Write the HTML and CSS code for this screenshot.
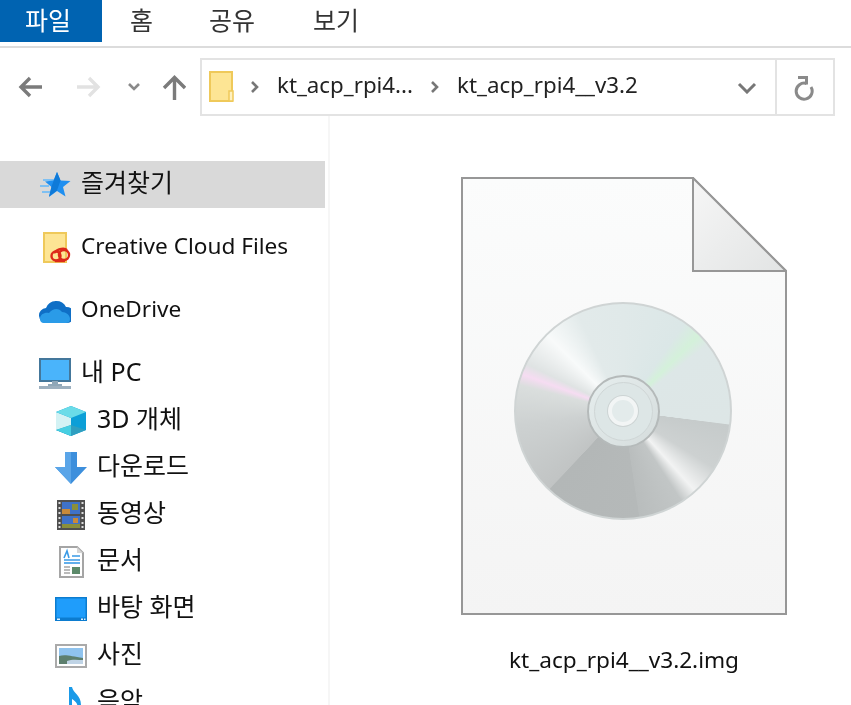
FILE: index.html
```html
<!DOCTYPE html>
<html lang="ko">
<head>
<meta charset="utf-8">
<title>kt_acp_rpi4__v3.2</title>
<link rel="stylesheet" href="styles.css">
</head>
<body>
<header class="ribbon">
  <div class="tab tab-file">파일</div>
  <div class="tab">홈</div>
  <div class="tab">공유</div>
  <div class="tab tab-last">보기</div>
</header>
<nav class="navbar">
  <div class="nav-buttons">
    <svg class="nav-svg" width="186" height="32" viewBox="0 0 186 32" fill="none" stroke-width="3.400">
      <path d="M42 16H21M30 7l-9 9 9 9" stroke="#7b7b7b"/>
      <path d="M77 16h21M89 7l9 9-9 9" stroke="#e2e2e2"/>
      <path d="M129 13l5 5 5-5" stroke="#8a8a8a" stroke-width="2.600"/>
      <path d="M174.500 29V7M164 17l10.500-10.500L185 17" stroke="#7b7b7b"/>
    </svg>
  </div>
  <div class="address">
    <div class="crumbs">
      <svg class="folder" width="26" height="32" viewBox="0 0 26 32">
        <rect x="1" y="1" width="22" height="29" fill="#fde594" stroke="#efc95a" stroke-width="2"/>
        <rect x="20" y="20" width="4" height="10" fill="#fff1c0" stroke="#efc95a" stroke-width="1.500"/>
      </svg>
      <svg class="chev" width="10" height="14" viewBox="0 0 10 14" fill="none"><path d="M2 2l5 5-5 5" stroke="#777" stroke-width="2.600"/></svg>
      <span class="crumb crumb-a">kt_acp_rpi4...</span>
      <svg class="chev" width="10" height="14" viewBox="0 0 10 14" fill="none"><path d="M2 2l5 5-5 5" stroke="#777" stroke-width="2.600"/></svg>
      <span class="crumb">kt_acp_rpi4__v3.2</span>
    </div>
    <div class="addr-drop">
      <svg width="20" height="12" viewBox="0 0 20 12" fill="none"><path d="M2 2l8 8 8-8" stroke="#777" stroke-width="3"/></svg>
    </div>
    <div class="addr-refresh">
      <svg width="22" height="28" viewBox="0 0 22 28" fill="none" stroke="#8a8a8a" stroke-width="3">
        <path d="M12.500 10.500A8 8 0 1 0 17 14"/>
        <path d="M4 4.500h8.500v7"/>
      </svg>
    </div>
  </div>
</nav>
<main class="main">
  <aside class="sidebar">
    <div class="row selected">
      <svg class="ico" viewBox="0 0 32 32">
        <path d="M4 11h11M1 17h9M3 23h8" stroke="#7fc0f2" stroke-width="2"/>
        <path d="M18 3l3.500 8.500 10 .5-7.500 6 2.500 9.500-8.500-5.500-8 6 2.500-10-6.500-5.500 8.500-1z" fill="#1f8ff0"/>
        <path d="M18 3l3.500 8.500-3.500 10-8 6 2.500-10z" fill="#0f7ad8"/>
      </svg>
      <span>즐겨찾기</span>
    </div>
    <div class="row gap">
      <svg class="ico" viewBox="0 0 32 32">
        <rect x="5" y="1" width="22" height="29" fill="#fde594" stroke="#efc95a" stroke-width="2"/>
        <g fill="none" stroke="#dd2a1a" stroke-width="2.400">
          <circle cx="17" cy="24" r="4.500"/><circle cx="25" cy="23" r="5"/><path d="M16 29h10"/><path d="M15 21c4-5 11-5 13-3"/>
        </g>
      </svg>
      <span>Creative Cloud Files</span>
    </div>
    <div class="row gap">
      <svg class="ico" viewBox="0 0 32 32">
        <path d="M8 28a7.500 7.500 0 0 1-1-15 11 11 0 0 1 20-1 8 8 0 0 1 1 16z" fill="#0f6fc6"/>
        <path d="M1 24c0-5 5-7 9-6 4-5 10-5 13-1 4 0 8 3 8 7 0 3-2 4-4 4H5c-3 0-4-2-4-4z" fill="#2a9be8"/>
      </svg>
      <span>OneDrive</span>
    </div>
    <div class="row gap">
      <svg class="ico" viewBox="0 0 32 32">
        <rect x="1" y="1" width="30" height="22" fill="#4ab4fb" stroke="#44779b" stroke-width="2"/>
        <path d="M13 23h6v3h4v2H9v-2h4z" fill="#8fa7b8"/>
        <rect x="0" y="28" width="32" height="3" fill="#9db0bf"/>
      </svg>
      <span>내 PC</span>
    </div>
    <div class="row child">
      <svg class="ico" viewBox="0 0 32 32">
        <path d="M16 1l15 6v18l-15 6L1 25V7z" fill="#0c9fd7"/>
        <path d="M1 7l15 6v12l-15 0z" fill="#d3f2f4"/>
        <path d="M1 7l15-6 15 6-15 6z" fill="#6adce8"/>
        <path d="M1 25l15-5 15 5-15 6z" fill="#2f9fc0"/>
        <path d="M1 25l15-5v11z" fill="#47cfe2"/>
      </svg>
      <span>3D 개체</span>
    </div>
    <div class="row child">
      <svg class="ico" viewBox="0 0 32 32">
        <path d="M10 0h12v15h10L16 32 0 15h10z" fill="#3d8fdc"/>
        <path d="M10 0h6v32L0 15h10z" fill="#5aa5e8"/>
      </svg>
      <span>다운로드</span>
    </div>
    <div class="row child">
      <svg class="ico" viewBox="0 0 32 32">
        <rect x="2" y="1" width="28" height="30" fill="#4f4f4f"/>
        <rect x="7" y="3" width="18" height="12" fill="#3f72c8"/>
        <rect x="7" y="17" width="18" height="12" fill="#3f72c8"/>
        <path d="M7 10h8v5H7zM18 19h5v5h-5z" fill="#c98a3a"/>
        <path d="M17 5h6v6h-6zM7 25h18v4H7z" fill="#8a8f3c"/>
        <path d="M3.500 3h2v2h-2zM3.500 8h2v2h-2zM3.500 13h2v2h-2zM3.500 18h2v2h-2zM3.500 23h2v2h-2zM3.500 27h2v2h-2zM26.500 3h2v2h-2zM26.500 8h2v2h-2zM26.500 13h2v2h-2zM26.500 18h2v2h-2zM26.500 23h2v2h-2zM26.500 27h2v2h-2z" fill="#ddd"/>
      </svg>
      <span>동영상</span>
    </div>
    <div class="row child">
      <svg class="ico" viewBox="0 0 32 32">
        <path d="M5 1h17l6 6v24H5z" fill="#fff" stroke="#a5a5a5" stroke-width="2"/>
        <path d="M22 1v6h6z" fill="#d5d5d5"/>
        <path d="M9 12l3-7 2 7M17 10h8M9 14h16" stroke="#3a9be6" stroke-width="1.600" fill="none"/>
        <path d="M9 17h16" stroke="#3a9be6" stroke-width="1.600"/>
        <path d="M9 21h6M9 24h6M9 27h6" stroke="#a5a5a5" stroke-width="1.600"/>
        <rect x="17" y="21" width="8" height="7" fill="#5c8a6a"/>
      </svg>
      <span>문서</span>
    </div>
    <div class="row child">
      <svg class="ico" viewBox="0 0 32 32">
        <rect x="0" y="4" width="32" height="24" fill="#0c7ccf"/>
        <rect x="1.500" y="5.500" width="29" height="19" fill="#1f9dfb"/>
        <path d="M2 25.500h3v1.500H2zM26 25.500h2v1.500h-2zM29 25.500h1.500v1.500H29z" fill="#dff1ff"/>
      </svg>
      <span>바탕 화면</span>
    </div>
    <div class="row child">
      <svg class="ico" viewBox="0 0 32 32">
        <rect x="1" y="5" width="30" height="22" fill="#fff" stroke="#aaa" stroke-width="2"/>
        <rect x="4" y="8" width="24" height="16" fill="#8fc3ee"/>
        <path d="M4 16c6-2 12 0 24 2v6H4z" fill="#5d7f6e"/>
        <path d="M12 21c5-2 11-1 16-1v4H12z" fill="#c0d4e6"/>
      </svg>
      <span>사진</span>
    </div>
    <div class="row child">
      <svg class="ico" viewBox="0 0 32 32">
        <path d="M14 0h3c1 6 9 8 9 18 0 3-1 6-2 8h-2c1-3 1-6 0-9-1-2-3-4-5-5v20h-3z" fill="#1a9ae8"/>
      </svg>
      <span>음악</span>
    </div>
  </aside>
  <section class="content">
    <div class="file-item">
      <div class="file-icon">
        <svg class="page" width="326" height="439" viewBox="0 0 326 439">
          <defs>
            <linearGradient id="paper" x1="0" y1="0" x2="0" y2="1">
              <stop offset="0" stop-color="#fbfcfc"/>
              <stop offset="1" stop-color="#f4f4f4"/>
            </linearGradient>
            <linearGradient id="foldfill" x1="0" y1="0" x2="1" y2="1">
              <stop offset="0" stop-color="#f6f6f6"/>
              <stop offset="1" stop-color="#e2e4e4"/>
            </linearGradient>
          </defs>
          <path d="M1 1H232L325 94V437H1z" fill="url(#paper)" stroke="#979797" stroke-width="2"/>
          <path d="M232 1V94H325z" fill="url(#foldfill)" stroke="#979797" stroke-width="2"/>
        </svg>
        <div class="disc">
          <div class="hub">
            <div class="hub-ring">
              <div class="hole"></div>
            </div>
          </div>
        </div>
      </div>
      <div class="file-name">kt_acp_rpi4__v3.2.img</div>
    </div>
  </section>
</main>
</body>
</html>
```

FILE: styles.css
```css
* { box-sizing: border-box; }
html, body { margin: 0; height: 705px; overflow: hidden; background: #fff; }
body {
  width: 851px;
  display: flex;
  flex-direction: column;
  font-family: "Noto Sans", "Noto Sans CJK KR", sans-serif;
  font-size: 25px;
  color: #111;
  filter: blur(0.45px);
}
.ribbon {
  display: flex;
  height: 48px;
  padding-bottom: 4px;
  border-bottom: 2px solid #dcdcdc;
  flex: none;
}
.tab {
  padding: 0 28px 3px;
  line-height: 38px;
  color: #333;
  font-family: "Noto Sans CJK KR", sans-serif;
  font-size: 25px;
}
.tab-file {
  width: 102px;
  padding: 0 0 3px 25px;
  background: #0063b1;
  color: #fff;
}
.tab-last { padding-left: 30px; }
.navbar {
  display: flex;
  flex: none;
  height: 68px;
  padding-top: 10px;
}
.nav-buttons {
  width: 200px;
  display: flex;
  align-items: center;
  flex: none;
}
.address {
  width: 635px;
  height: 58px;
  border: 2px solid #e3e3e3;
  display: flex;
  align-items: stretch;
}
.crumbs {
  flex: 1;
  display: flex;
  align-items: center;
  padding-left: 7px;
}
.folder { margin-right: 15px; }
.chev { margin-right: 17px; }
.crumb { font-size: 22.300px; color: #222; line-height: 1; padding-bottom: 4px; }
.crumb-a { margin-right: 17px; }
.addr-drop {
  width: 58px;
  display: flex;
  align-items: center;
  justify-content: flex-end;
  padding-right: 18px;
  padding-top: 2px;
}
.addr-refresh {
  width: 58px;
  border-left: 2px solid #e3e3e3;
  display: flex;
  align-items: center;
  justify-content: center;
}
.main {
  display: flex;
  flex: 1;
  min-height: 0;
}
.sidebar {
  width: 330px;
  flex: none;
  padding-top: 45px;
  padding-right: 5px;
  border-right: 2px solid #f6f6f6;
  overflow: hidden;
}
.row {
  height: 47px;
  display: flex;
  align-items: center;
  gap: 10px;
  padding-left: 39px;
  white-space: nowrap;
}
.row span { line-height: 1; padding-bottom: 4px; }
.row.gap { margin-top: 16px; }
.row.child { padding-left: 55px; }
.row.selected { background: #d9d9d9; width: 325px; }
.ico { width: 32px; height: 32px; flex: none; }
.row:nth-child(2) span, .row:nth-child(3) span { font-size: 22.600px; padding-bottom: 3px; }
.content { flex: 1; padding: 61px 0 0 131px; }
.file-item {
  width: 326px;
  display: flex;
  flex-direction: column;
  align-items: center;
}
.file-icon { position: relative; width: 326px; height: 439px; }
.page { display: block; }
.disc {
  position: absolute;
  left: 53px;
  top: 125px;
  width: 218px;
  height: 218px;
  border-radius: 50%;
  border: 2px solid #cfd4d4;
  display: flex;
  align-items: center;
  justify-content: center;
  background: conic-gradient(
    #e0e9e9 0deg, #dbe7e7 35deg, #d4f1da 45deg, #dde7e7 52deg, #dde6e6 97deg,
    #c6cbcb 97.500deg, #cdd1d1 122deg, #f2f3f3 138deg, #c2c6c6 147deg, #b9bdbd 171deg,
    #b5b9b9 171.500deg, #b3b7b7 223deg, #c1c4c4 223.500deg, #cdd1d1 262deg, #dadedd 284deg,
    #f6dcf2 290deg, #dfe3e3 296deg, #f8fafa 315deg, #e2eaea 335deg, #e0e9e9 360deg
  );
}
.hub {
  width: 73px;
  height: 73px;
  border-radius: 50%;
  border: 2px solid #b5baba;
  background: linear-gradient(135deg, #e6eeee, #d5dcdc);
  display: flex;
  align-items: center;
  justify-content: center;
}
.hub-ring {
  width: 59px;
  height: 59px;
  border-radius: 50%;
  border: 1px solid #cfd6d6;
  background: #dde6e6;
  display: flex;
  align-items: center;
  justify-content: center;
}
.hole {
  width: 30px;
  height: 30px;
  border-radius: 50%;
  border: 4px solid #f2f5f5;
  background: #e3ebeb;
  box-shadow: 0 0 0 1px #cdd4d4;
}
.file-name {
  margin-top: 28px;
  font-size: 22.600px;
  line-height: 32px;
  color: #111;
  white-space: nowrap;
}
```
